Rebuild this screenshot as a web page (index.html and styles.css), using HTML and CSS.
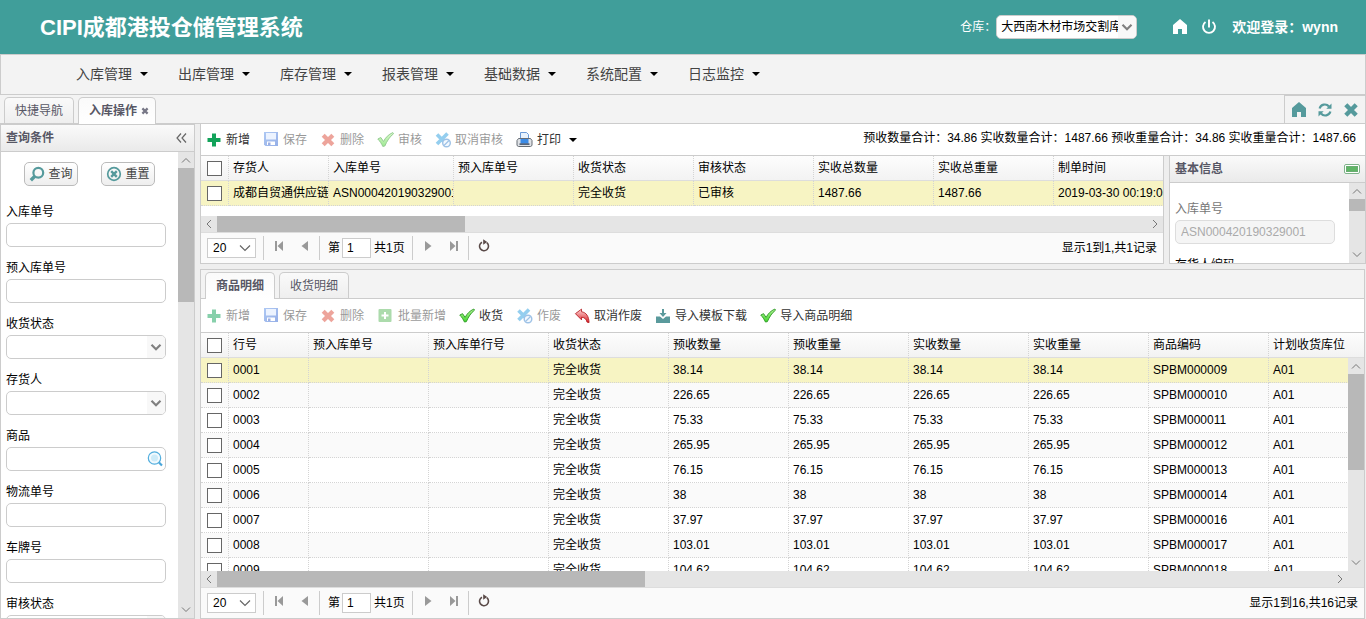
FILE: index.html
```html
<!DOCTYPE html>
<html lang="zh-CN">
<head>
<meta charset="utf-8">
<meta name="viewport" content="width=device-width, initial-scale=1">
<title>CIPI成都港投仓储管理系统</title>
<link rel="stylesheet" href="styles.css">
</head>
<body>
<svg class="sprite" aria-hidden="true">
  <defs>
    <linearGradient id="gcheck" x1="0" y1="0" x2="0" y2="1"><stop offset="0" stop-color="#b8f59a"/><stop offset="1" stop-color="#3fd52a"/></linearGradient>
    <linearGradient id="gundo" x1="0" y1="0" x2="0" y2="1"><stop offset="0" stop-color="#ffd9d9"/><stop offset="1" stop-color="#d81f26"/></linearGradient>
    <linearGradient id="gsave" x1="0" y1="0" x2="1" y2="1"><stop offset="0" stop-color="#5f93ea"/><stop offset="1" stop-color="#2f62d0"/></linearGradient>
    <symbol id="i-add" viewBox="0 0 16 16"><path fill="#12a35a" d="M6 1.500h4v4.500h4.500v4H10v4.500H6V10H1.500V6H6z"/></symbol>
    <symbol id="i-save" viewBox="0 0 16 16"><path fill="url(#gsave)" d="M1 0h14v14H2.500L1 12.500z"/><path fill="#dbe9ff" d="M3 1h10v6.500H3z"/><path fill="#fff" d="M4 9.500h8V13H4z"/><path fill="#3b62c8" d="M5 10.500h2.500V13H5z"/></symbol>
    <symbol id="i-del" viewBox="0 0 16 16"><path stroke="#dd4b39" stroke-width="4.200" fill="none" d="M3.200 3.200l9.600 9.600M12.800 3.200l-9.600 9.600"/></symbol>
    <symbol id="i-check" viewBox="0 0 17 16"><path fill="url(#gcheck)" stroke="#2f9a28" stroke-width="1" stroke-linejoin="round" d="M.8 7L3.800 5.500l2.700 4C8.500 5.500 11.500 2.500 15.800.6l.7 1.200C12.800 4.500 10 9 7.800 14l-2 .4C4.500 11.500 3 9.200.8 7z"/></symbol>
    <symbol id="i-void" viewBox="0 0 16 16"><path stroke="#2b9fe0" stroke-width="3.600" fill="none" d="M2 2.500l9 9M12.500 1.500L2 12"/><circle cx="11.500" cy="11" r="3.800" fill="#e8f4ff" stroke="#3f86cf" stroke-width="1.400"/><path stroke="#3f86cf" stroke-width="1.300" d="M9 13.500l5-5"/></symbol>
    <symbol id="i-print" viewBox="0 0 17 16"><path fill="#e8f2fd" stroke="#6a9ad8" d="M4.500 7V.5h6l2 2V7"/><path fill="#dfe2e6" stroke="#666c74" d="M2.500 6.500h12l1.500 2v5l-1.500 1h-12l-1.500-1v-5z"/><path fill="#3b8be6" d="M4.500 7h8v4.500h-8z"/><path fill="#1c2f4a" d="M3.500 11.500h10v1.200h-10z"/></symbol>
    <symbol id="i-batch" viewBox="0 0 16 16"><rect x="1" y="1" width="13" height="13" rx="1" fill="#5cb85c"/><path fill="#fff" d="M6.500 4h2v2.500H11v2H8.500V11h-2V8.500H4v-2h2.500z"/></symbol>
    <symbol id="i-undo" viewBox="0 0 17 16"><path fill="url(#gundo)" stroke="#b3161c" stroke-width=".9" stroke-linejoin="round" d="M1.500 5.500L8 .7v2.800c5 .6 7.800 5 8 11.500l-2.200-.5c-.6-3.200-2.500-5-5.800-5.200v2.800z"/></symbol>
    <symbol id="i-import" viewBox="0 0 16 16"><path fill="#5a9a9c" d="M7 1h2v4h2.500L8 9 4.500 5H7zM1 8.500h4l3 2.500 3-2.500h4V15H1z"/></symbol>
    <symbol id="i-home" viewBox="0 0 16 16"><path fill="currentColor" d="M8 0l7 6v9h-5v-5H6v5H1V6z"/></symbol>
    <symbol id="i-power" viewBox="0 0 16 16"><path fill="none" stroke="currentColor" stroke-width="1.900" d="M4.500 3A6 6 0 1 0 11.500 3M8 .5v8"/></symbol>
    <symbol id="i-reload" viewBox="0 0 16 16"><path fill="none" stroke="currentColor" stroke-width="2.200" d="M2.600 6.500A5.400 5.400 0 0 1 12 4.500M13.400 9.500A5.400 5.400 0 0 1 4 11.500"/><path fill="currentColor" d="M14.500 1.500v5.200H9.300zM1.500 14.500V9.300h5.200z"/></symbol>
    <symbol id="i-x" viewBox="0 0 16 16"><path stroke="currentColor" stroke-width="4.400" fill="none" d="M2.800 2.800l10.400 10.400M13.200 2.800L2.800 13.200"/></symbol>
    <symbol id="i-search" viewBox="0 0 16 16"><circle cx="9.300" cy="6.700" r="4.900" fill="none" stroke="currentColor" stroke-width="2.200"/><path stroke="currentColor" stroke-width="3.400" d="M5.800 10.200L1.800 14.200"/></symbol>
    <symbol id="i-reset" viewBox="0 0 16 16"><circle cx="8" cy="8" r="6.300" fill="none" stroke="currentColor" stroke-width="1.700"/><path stroke="currentColor" stroke-width="2.400" d="M5.200 5.200l5.600 5.600M10.800 5.200l-5.600 5.600"/></symbol>
    <symbol id="i-lens" viewBox="0 0 16 16"><circle cx="7.500" cy="7" r="6.200" fill="#f2fafe" stroke="#52aede" stroke-width="1.200"/><circle cx="7.500" cy="7" r="3.500" fill="#cdebf8"/><path stroke="#4aa6da" stroke-width="2.200" d="M12 11.500l3 3"/></symbol>
    <symbol id="i-up" viewBox="0 0 16 16"><path fill="none" stroke="#777" d="M4 10.500l4-4 4 4"/></symbol>
    <symbol id="i-down" viewBox="0 0 16 16"><path fill="none" stroke="#777" d="M4 5.500l4 4 4-4"/></symbol>
    <symbol id="i-left" viewBox="0 0 16 16"><path fill="none" stroke="#777" d="M10 4L6 8l4 4"/></symbol>
    <symbol id="i-right" viewBox="0 0 16 16"><path fill="none" stroke="#777" d="M6 4l4 4-4 4"/></symbol>
    <symbol id="i-chev" viewBox="0 0 16 16"><path fill="none" stroke="#808080" stroke-width="2.200" d="M3.500 5.800L8 10.200l4.500-4.400"/></symbol>
    <symbol id="i-thin" viewBox="0 0 16 16"><path fill="none" stroke="#666" stroke-width="1.200" d="M3 5.500l5 5 5-5"/></symbol>
    <symbol id="i-collapse" viewBox="0 0 16 16"><path fill="none" stroke="#666" stroke-width="1.200" d="M8 3.500L4 8l4 4.500M13 3.500L9 8l4 4.500"/></symbol>
    <symbol id="i-first" viewBox="0 0 16 16"><path fill="#999" d="M4 3h2v10H4zM12 3v10L6.500 8z"/></symbol>
    <symbol id="i-prev" viewBox="0 0 16 16"><path fill="#999" d="M11 3v10L4.500 8z"/></symbol>
    <symbol id="i-next" viewBox="0 0 16 16"><path fill="#999" d="M5 3v10l6.500-5z"/></symbol>
    <symbol id="i-last" viewBox="0 0 16 16"><path fill="#999" d="M10 3h2v10h-2zM4 3v10l5.500-5z"/></symbol>
    <symbol id="i-refresh" viewBox="0 0 16 16"><path fill="none" stroke="#5a4a48" stroke-width="1.600" d="M10.800 4.700A4.500 4.500 0 1 1 6 4.200"/><path fill="#5a4a48" d="M7.200 1.200l4 2.800-4 2.800z"/></symbol>
    <symbol id="i-card" viewBox="0 0 16 10"><rect x=".5" y=".5" width="15" height="9" rx="1.500" fill="#fff" stroke="#7fb38a"/><rect x="2.500" y="2.500" width="11" height="5" fill="#5fb565" stroke="#6aac72"/></symbol>
  </defs>
</svg>

<header class="top">
  <h1 class="brand">CIPI成都港投仓储管理系统</h1>
  <label class="wh-label" for="wh">仓库：</label>
  <span class="combo wh-combo">
    <select id="wh" class="box wh"><option>大西南木材市场交割库</option></select>
    <span class="drop"><svg class="ic"><use href="#i-chev"/></svg></span>
  </span>
  <a class="top-ic" href="#" aria-label="首页"><svg class="ic"><use href="#i-home"/></svg></a>
  <a class="top-ic" href="#" aria-label="退出"><svg class="ic"><use href="#i-power"/></svg></a>
  <span class="hello">欢迎登录：wynn</span>
</header>

<nav class="menu">
  <button class="menu-item">入库管理<span class="caret"></span></button>
  <button class="menu-item">出库管理<span class="caret"></span></button>
  <button class="menu-item">库存管理<span class="caret"></span></button>
  <button class="menu-item">报表管理<span class="caret"></span></button>
  <button class="menu-item">基础数据<span class="caret"></span></button>
  <button class="menu-item">系统配置<span class="caret"></span></button>
  <button class="menu-item">日志监控<span class="caret"></span></button>
</nav>

<div class="tabs main-tabs">
  <button class="tab">快捷导航</button>
  <button class="tab on">入库操作<svg class="tab-x"><use href="#i-x"/></svg></button>
  <div class="tab-tools">
    <a href="#" aria-label="首页"><svg class="ic"><use href="#i-home"/></svg></a>
    <a href="#" aria-label="刷新"><svg class="ic"><use href="#i-reload"/></svg></a>
    <a href="#" aria-label="关闭"><svg class="ic"><use href="#i-x"/></svg></a>
  </div>
</div>

<main class="work">
  <aside class="panel query">
    <div class="panel-head"><h2>查询条件</h2><button class="plain" aria-label="收起"><svg class="ic"><use href="#i-collapse"/></svg></button></div>
    <div class="panel-body">
      <form class="form">
        <div class="actions">
          <button type="button" class="btn"><svg class="ic"><use href="#i-search"/></svg>查询</button>
          <button type="button" class="btn"><svg class="ic"><use href="#i-reset"/></svg>重置</button>
        </div>
        <label class="lab" for="q1">入库单号</label><input id="q1" class="box">
        <label class="lab" for="q2">预入库单号</label><input id="q2" class="box">
        <label class="lab" for="q3">收货状态</label>
        <span class="combo"><select id="q3" class="box"><option></option></select><span class="drop"><svg class="ic"><use href="#i-chev"/></svg></span></span>
        <label class="lab" for="q4">存货人</label>
        <span class="combo"><select id="q4" class="box"><option></option></select><span class="drop"><svg class="ic"><use href="#i-chev"/></svg></span></span>
        <label class="lab" for="q5">商品</label>
        <span class="combo"><input id="q5" class="box"><span class="drop lens"><svg class="ic"><use href="#i-lens"/></svg></span></span>
        <label class="lab" for="q6">物流单号</label><input id="q6" class="box">
        <label class="lab" for="q7">车牌号</label><input id="q7" class="box">
        <label class="lab" for="q8">审核状态</label>
        <span class="combo"><select id="q8" class="box"><option></option></select><span class="drop"><svg class="ic"><use href="#i-chev"/></svg></span></span>
      </form>
      <div class="vbar"><svg class="ic"><use href="#i-up"/></svg><span class="vthumb t-query"></span><svg class="ic end"><use href="#i-down"/></svg></div>
    </div>
  </aside>

  <div class="right">
    <section class="upper">
      <div class="toolbar">
        <button class="tool"><svg class="ic"><use href="#i-add"/></svg>新增</button>
        <button class="tool" disabled><svg class="ic"><use href="#i-save"/></svg>保存</button>
        <button class="tool" disabled><svg class="ic"><use href="#i-del"/></svg>删除</button>
        <button class="tool" disabled><svg class="ic wide"><use href="#i-check"/></svg>审核</button>
        <button class="tool" disabled><svg class="ic"><use href="#i-void"/></svg>取消审核</button>
        <button class="tool"><svg class="ic wide"><use href="#i-print"/></svg>打印<span class="caret"></span></button>
        <span class="sums">预收数量合计：34.86 实收数量合计：1487.66 预收重量合计：34.86 实收重量合计：1487.66</span>
      </div>
      <div class="split">
        <div class="gridbox">
          <div class="view">
            <table class="grid g1">
              <colgroup><col class="c28"><col class="c100"><col class="c125"><col class="c120"><col class="c120"><col class="c120"><col class="c120"><col class="c120"><col class="c120"></colgroup>
              <thead><tr><th><input type="checkbox" aria-label="全选"></th><th>存货人</th><th>入库单号</th><th>预入库单号</th><th>收货状态</th><th>审核状态</th><th>实收总数量</th><th>实收总重量</th><th>制单时间</th></tr></thead>
              <tbody><tr class="sel"><td><input type="checkbox" aria-label="选择"></td><td>成都自贸通供应链</td><td>ASN000420190329001</td><td></td><td>完全收货</td><td>已审核</td><td>1487.66</td><td>1487.66</td><td>2019-03-30 00:19:05</td></tr></tbody>
            </table>
          </div>
          <div class="hbar"><svg class="ic"><use href="#i-left"/></svg><span class="hthumb t-g1"></span><svg class="ic end"><use href="#i-right"/></svg></div>
          <div class="pager">
            <span class="combo page-combo"><select class="page-size" aria-label="每页条数"><option>20</option></select><svg class="ic over"><use href="#i-thin"/></svg></span>
            <span class="sep"></span>
            <button class="pg" aria-label="首页"><svg class="ic"><use href="#i-first"/></svg></button><button class="pg" aria-label="上一页"><svg class="ic"><use href="#i-prev"/></svg></button>
            <span class="sep"></span>
            <label class="pg-of" for="p1">第</label><input id="p1" class="pg-in" value="1"><span class="pg-all">共1页</span>
            <span class="sep"></span>
            <button class="pg" aria-label="下一页"><svg class="ic"><use href="#i-next"/></svg></button><button class="pg" aria-label="末页"><svg class="ic"><use href="#i-last"/></svg></button>
            <span class="sep"></span>
            <button class="pg" aria-label="刷新"><svg class="ic"><use href="#i-refresh"/></svg></button>
            <span class="pg-info">显示1到1,共1记录</span>
          </div>
        </div>
        <div class="panel info">
          <div class="panel-head"><h2>基本信息</h2><svg class="card"><use href="#i-card"/></svg></div>
          <div class="panel-body">
            <div class="form info-form">
              <label class="lab dim" for="b1">入库单号</label><input id="b1" class="box" value="ASN000420190329001" disabled>
              <label class="lab" for="b2">存货人编码</label><input id="b2" class="box">
            </div>
            <div class="vbar"><svg class="ic"><use href="#i-up"/></svg><span class="vthumb t-info"></span><svg class="ic end"><use href="#i-down"/></svg></div>
          </div>
        </div>
      </div>
    </section>

    <section class="lower">
      <div class="tabs sub-tabs">
        <button class="tab on">商品明细</button>
        <button class="tab">收货明细</button>
      </div>
      <div class="toolbar tb2">
        <button class="tool" disabled><svg class="ic"><use href="#i-add"/></svg>新增</button>
        <button class="tool" disabled><svg class="ic"><use href="#i-save"/></svg>保存</button>
        <button class="tool" disabled><svg class="ic"><use href="#i-del"/></svg>删除</button>
        <button class="tool" disabled><svg class="ic wide"><use href="#i-batch"/></svg>批量新增</button>
        <button class="tool"><svg class="ic"><use href="#i-check"/></svg>收货</button>
        <button class="tool" disabled><svg class="ic wide"><use href="#i-void"/></svg>作废</button>
        <button class="tool"><svg class="ic"><use href="#i-undo"/></svg>取消作废</button>
        <button class="tool"><svg class="ic"><use href="#i-import"/></svg>导入模板下载</button>
        <button class="tool"><svg class="ic"><use href="#i-check"/></svg>导入商品明细</button>
      </div>
      <div class="view">
        <table class="grid g2">
          <colgroup><col class="c28"><col class="c80"><col class="c120"><col class="c120"><col class="c120"><col class="c120"><col class="c120"><col class="c120"><col class="c120"><col class="c120"><col class="c120"></colgroup>
          <thead><tr><th><input type="checkbox" aria-label="全选"></th><th>行号</th><th>预入库单号</th><th>预入库单行号</th><th>收货状态</th><th>预收数量</th><th>预收重量</th><th>实收数量</th><th>实收重量</th><th>商品编码</th><th>计划收货库位</th></tr></thead>
          <tbody>
            <tr class="sel"><td><input type="checkbox" aria-label="0001"></td><td>0001</td><td></td><td></td><td>完全收货</td><td>38.14</td><td>38.14</td><td>38.14</td><td>38.14</td><td>SPBM000009</td><td>A01</td></tr>
            <tr><td><input type="checkbox" aria-label="0002"></td><td>0002</td><td></td><td></td><td>完全收货</td><td>226.65</td><td>226.65</td><td>226.65</td><td>226.65</td><td>SPBM000010</td><td>A01</td></tr>
            <tr><td><input type="checkbox" aria-label="0003"></td><td>0003</td><td></td><td></td><td>完全收货</td><td>75.33</td><td>75.33</td><td>75.33</td><td>75.33</td><td>SPBM000011</td><td>A01</td></tr>
            <tr><td><input type="checkbox" aria-label="0004"></td><td>0004</td><td></td><td></td><td>完全收货</td><td>265.95</td><td>265.95</td><td>265.95</td><td>265.95</td><td>SPBM000012</td><td>A01</td></tr>
            <tr><td><input type="checkbox" aria-label="0005"></td><td>0005</td><td></td><td></td><td>完全收货</td><td>76.15</td><td>76.15</td><td>76.15</td><td>76.15</td><td>SPBM000013</td><td>A01</td></tr>
            <tr><td><input type="checkbox" aria-label="0006"></td><td>0006</td><td></td><td></td><td>完全收货</td><td>38</td><td>38</td><td>38</td><td>38</td><td>SPBM000014</td><td>A01</td></tr>
            <tr><td><input type="checkbox" aria-label="0007"></td><td>0007</td><td></td><td></td><td>完全收货</td><td>37.97</td><td>37.97</td><td>37.97</td><td>37.97</td><td>SPBM000016</td><td>A01</td></tr>
            <tr><td><input type="checkbox" aria-label="0008"></td><td>0008</td><td></td><td></td><td>完全收货</td><td>103.01</td><td>103.01</td><td>103.01</td><td>103.01</td><td>SPBM000017</td><td>A01</td></tr>
            <tr><td><input type="checkbox" aria-label="0009"></td><td>0009</td><td></td><td></td><td>完全收货</td><td>104.62</td><td>104.62</td><td>104.62</td><td>104.62</td><td>SPBM000018</td><td>A01</td></tr>
          </tbody>
        </table>
        <div class="vbar over-grid"><svg class="ic"><use href="#i-up"/></svg><span class="vthumb t-g2"></span><svg class="ic end"><use href="#i-down"/></svg></div>
      </div>
      <div class="hbar corner"><svg class="ic"><use href="#i-left"/></svg><span class="hthumb t-g2h"></span><svg class="ic end"><use href="#i-right"/></svg></div>
      <div class="pager">
        <span class="combo page-combo"><select class="page-size" aria-label="每页条数"><option>20</option></select><svg class="ic over"><use href="#i-thin"/></svg></span>
        <span class="sep"></span>
        <button class="pg" aria-label="首页"><svg class="ic"><use href="#i-first"/></svg></button><button class="pg" aria-label="上一页"><svg class="ic"><use href="#i-prev"/></svg></button>
        <span class="sep"></span>
        <label class="pg-of" for="p2">第</label><input id="p2" class="pg-in" value="1"><span class="pg-all">共1页</span>
        <span class="sep"></span>
        <button class="pg" aria-label="下一页"><svg class="ic"><use href="#i-next"/></svg></button><button class="pg" aria-label="末页"><svg class="ic"><use href="#i-last"/></svg></button>
        <span class="sep"></span>
        <button class="pg" aria-label="刷新"><svg class="ic"><use href="#i-refresh"/></svg></button>
        <span class="pg-info">显示1到16,共16记录</span>
      </div>
    </section>
  </div>
</main>
</body>
</html>
```
FILE: styles.css
```css
* { box-sizing: border-box; }
html, body { height: 100%; }
body {
  margin: 0;
  display: flex;
  flex-direction: column;
  overflow: hidden;
  background: #eee;
  color: #000;
  font: 12px/16px "Liberation Sans", "Noto Sans CJK SC", sans-serif;
}
button, input, select { font: inherit; color: inherit; margin: 0; }
button { border: 0; padding: 0; background: none; white-space: nowrap; }
h1, h2 { margin: 0; }
a { color: inherit; }
.sprite { position: absolute; width: 0; height: 0; }
.ic { width: 16px; height: 16px; flex: none; display: block; }
.wide { width: 17px; }
.caret {
  border: 4px solid transparent;
  border-top-color: #000;
  border-bottom: 0;
}

/* Header */
.top {
  flex: none;
  height: 54px;
  display: flex;
  align-items: center;
  padding: 0 28px 0 40px;
  background: #409e9a;
  color: #fff;
}
.brand { flex: 1; font-size: 22px; line-height: 32px; padding-top: 2px; }
.top-ic { margin-right: 13px; }
.wh-combo { width: 141px; margin-right: 35px; }
.hello { font-size: 14px; font-weight: bold; line-height: 20px; margin-left: 2px; }

/* Menu */
.menu {
  flex: none;
  height: 41px;
  display: flex;
  padding: 0 0 2px 75px;
  border: 1px solid #ccc;
  background: #f3f3f3;
}
.menu-item {
  width: 102px;
  display: flex;
  align-items: center;
  gap: 8px;
  font-size: 14px;
  color: #444;
}

/* Tabs */
.tabs {
  flex: none;
  display: flex;
  align-items: flex-end;
  gap: 4px;
  padding-left: 4px;
  border-bottom: 1px solid #ccc;
  background: #f3f3f3;
  color: #575765;
}
.main-tabs { height: 29px; }
.tab {
  height: 26px;
  display: flex;
  align-items: center;
  gap: 4px;
  padding: 0 10px;
  border: 1px solid #ccc;
  border-bottom: 0;
  border-radius: 5px 5px 0 0;
  background: linear-gradient(#fafafa, #eee);
}
.tab.on {
  height: 27px;
  margin-bottom: -1px;
  padding-right: 6px;
  background: linear-gradient(#fafafa, #fff);
  font-weight: bold;
}
.tab-x { width: 8px; height: 8px; color: #777786; }
.tab-tools {
  align-self: stretch;
  margin-left: auto;
  display: flex;
  align-items: center;
  gap: 10px;
  padding: 0 6px;
  border: 1px solid #ccc;
  border-bottom: 0;
  color: #559a9c;
}

/* Work area */
.work { flex: 1; min-height: 0; display: flex; gap: 5px; }
.panel {
  display: flex;
  flex-direction: column;
  border: 1px solid #ccc;
  background: #fff;
  overflow: hidden;
}
.query { width: 195px; flex: none; }
.panel-head {
  flex: none;
  height: 27px;
  display: flex;
  align-items: center;
  justify-content: space-between;
  padding: 0 5px;
  border-bottom: 1px solid #ccc;
  background: linear-gradient(#fafafa, #eaeaea);
  color: #575765;
}
.panel-head h2 { font-size: 12px; line-height: 16px; }
.plain { display: flex; }
.panel-body { flex: 1; min-height: 0; display: flex; }
.form {
  flex: 1;
  min-width: 0;
  display: flex;
  flex-direction: column;
  overflow: hidden;
  padding: 10px 12px 0 5px;
}
.actions {
  flex: none;
  display: flex;
  gap: 23px;
  padding: 0 10px 13px 18px;
}
.btn {
  width: 54px;
  height: 24px;
  display: flex;
  align-items: center;
  justify-content: center;
  gap: 3px;
  border: 1px solid #bbb;
  border-radius: 5px;
  background: linear-gradient(#fff, #eee);
  color: #444;
}
.btn .ic { color: #559a9c; }
.lab { flex: none; padding-top: 2px; line-height: 22px; }
.dim { color: #777; }
.box {
  display: block;
  flex: none;
  width: 100%;
  height: 24px;
  padding: 0 5px;
  border: 1px solid #ccc;
  border-radius: 5px;
  background: #fff;
  color: #000;
  outline: 0;
  appearance: none;
}
.form > .box, .form > .combo { margin-bottom: 8px; }
.box.wh { padding: 0 4px; }
.box:disabled { background: #f5f5f5; border-color: #ddd; color: #aaa; }
.combo { position: relative; flex: none; display: block; }
.drop {
  position: absolute;
  top: 1px;
  right: 1px;
  width: 18px;
  height: 22px;
  display: flex;
  align-items: center;
  justify-content: center;
  border-radius: 0 4px 4px 0;
  background: #f8f8f8;
  pointer-events: none;
}
.lens { background: none; right: 2px; }

/* Scrollbars */
.vbar {
  flex: none;
  width: 16px;
  display: flex;
  flex-direction: column;
  background: #e5e5e5;
}
.hbar { flex: none; height: 16px; display: flex; background: #e5e5e5; }
.end { margin: auto 0 0; }
.hbar .end { margin: 0 0 0 auto; }
.vthumb, .hthumb { flex: none; background: #b8b8b8; }
.t-query { height: 134px; }
.t-info { height: 12px; }
.t-g2 { height: 96px; }
.t-g1 { width: 248px; }
.t-g2h { width: 428px; }
.corner { padding-right: 16px; }
.over-grid { position: absolute; top: 25px; right: 0; bottom: 0; }

/* Right side */
.right {
  flex: 1;
  min-width: 0;
  display: flex;
  flex-direction: column;
  gap: 5px;
}
.upper { flex: none; }
.toolbar {
  flex: none;
  height: 32px;
  display: flex;
  align-items: center;
  gap: 13px;
  padding: 1px 9px 0 5px;
  border: 1px solid #ccc;
  border-top: 0;
  background: #fff;
}
.tb2 { height: 34px; padding-top: 0; border-left: 0; border-right: 0; }
.tool { display: flex; align-items: center; gap: 4px; color: #333; }
.tool .caret { margin-left: 4px; }
.tool:disabled { opacity: .5; }
.sums { margin-left: auto; white-space: nowrap; line-height: 16px; padding-bottom: 4px; }
.split { display: flex; gap: 5px; height: 108px; }
.gridbox {
  flex: 1;
  min-width: 0;
  display: flex;
  flex-direction: column;
  border: 1px solid #ccc;
  border-top: 0;
  background: #fff;
}
.info { width: 197px; flex: none; border-top: 0; }
.info-form { padding-top: 13px; padding-right: 14px; }
.card { width: 16px; height: 10px; }
.lower {
  flex: 1;
  min-height: 0;
  margin-right: 1px;
  display: flex;
  flex-direction: column;
  border: 1px solid #ccc;
  background: #fff;
}
.sub-tabs { height: 29px; }
.sub-tabs .tab { padding: 0 10px; }

/* Grids */
.view { flex: 1; min-height: 0; overflow: hidden; position: relative; }
.grid { table-layout: fixed; border-collapse: separate; border-spacing: 0; }
.g1 { width: 973px; }
.g2 { width: 1188px; }
.c28 { width: 28px; }
.c80 { width: 80px; }
.c100 { width: 100px; }
.c120 { width: 120px; }
.c125 { width: 125px; }
.grid th, .grid td {
  height: 25px;
  padding: 0 0 0 4px;
  border-right: 1px dotted #d4d4d4;
  border-bottom: 1px dotted #d4d4d4;
  overflow: hidden;
  white-space: nowrap;
  text-align: left;
  font-weight: normal;
  vertical-align: middle;
}
.grid th { border-bottom: 1px solid #ddd; }
.grid thead tr { background: linear-gradient(#fdfdfd, #f2f2f2); }
.grid th:first-child, .grid td:first-child { padding-left: 6px; }
.grid tbody tr:nth-child(even) { background: #fafafa; }
.grid tbody tr.sel { background: #f7f4c3; }
.grid input {
  display: block;
  width: 15px;
  height: 15px;
  border: 1px solid #666;
  background: #fff;
  appearance: none;
}

/* Pager */
.pager {
  flex: none;
  height: 31px;
  display: flex;
  align-items: center;
  padding: 0 6px;
  border-top: 1px solid #ddd;
  background: #fafafa;
}
.page-combo { width: 49px; }
.page-size {
  display: block;
  width: 100%;
  height: 20px;
  padding: 0 5px;
  border: 1px solid #ccc;
  background: #fff;
  appearance: none;
}
.over { position: absolute; top: 2px; right: 3px; pointer-events: none; }
.sep { width: 1px; height: 24px; background: #ccc; margin: 0 2px; }
.page-combo + .sep { margin-left: 7px; }
.pg { width: 26px; height: 24px; display: flex; justify-content: center; align-items: flex-start; padding-top: 2px; }
.pg + .sep { margin-left: 1px; }
.pg-of { margin: 0 2px 0 6px; }
.pg-in { width: 29px; height: 20px; padding: 0 4px; border: 1px solid #ccc; background: #fff; }
.pg-all { margin: 0 5px 0 3px; }
.pg-info { margin-left: auto; }
```
